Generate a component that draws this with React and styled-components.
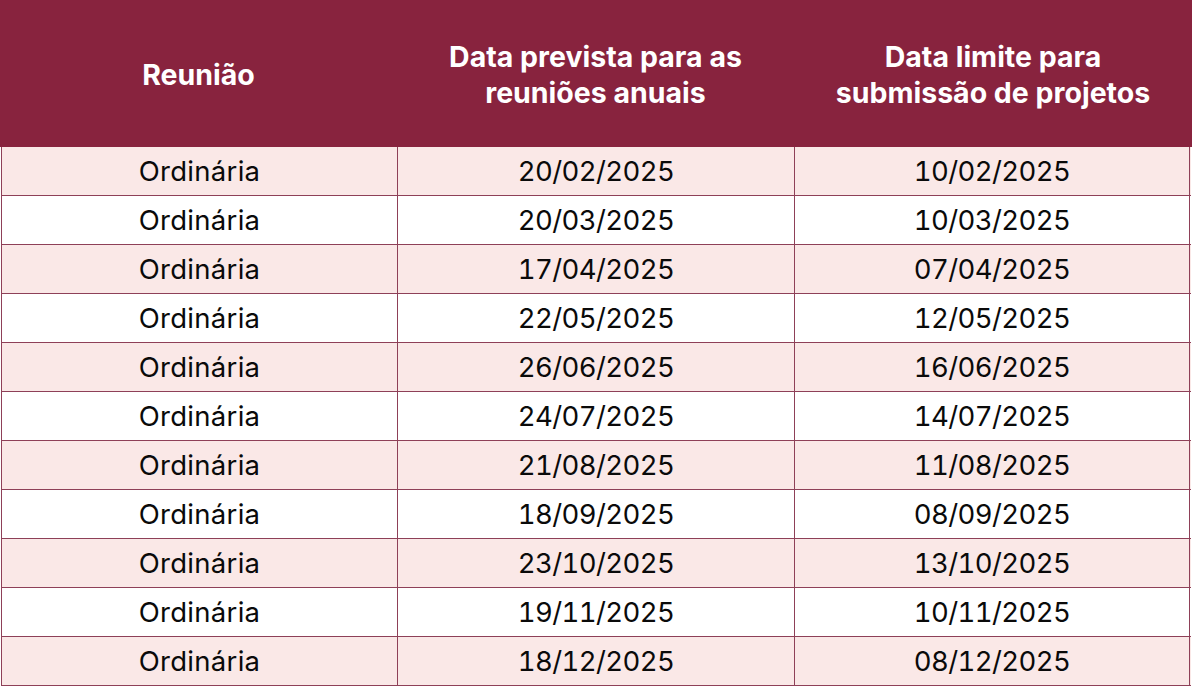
import React from "react";
import styled, { createGlobalStyle } from "styled-components";

const Global = createGlobalStyle`
  html, body { margin: 0; padding: 0; background: #ffffff; }
  body { font-family: Inter, "Noto Sans", sans-serif; }
`;

const Table = styled.div`
  width: 1192px;
  display: flex;
  flex-direction: column;
`;

const HeaderRow = styled.div`
  display: grid;
  grid-template-columns: 397px 397px 398px;
  height: 147px;
  background: #88233e;
  color: #ffffff;
`;

const HeaderCell = styled.div`
  display: flex;
  align-items: center;
  justify-content: center;
  text-align: center;
  font-weight: 700;
  font-size: 28.5px;
  line-height: 36px;
  padding-top: 2px;
  white-space: nowrap;
`;

const Row = styled.div`
  display: grid;
  grid-template-columns: 396px 397px 396px;
  margin-left: 1px;
  width: 1190px;
  height: 48px;
  border-bottom: 1px solid #8e4058;
  background: ${(p) => (p.$alt ? "#fae8e7" : "#ffffff")};
`;

const Cell = styled.div`
  display: flex;
  align-items: center;
  justify-content: center;
  font-size: 27.5px;
  font-variant-numeric: tabular-nums;
  letter-spacing: ${(p) => (p.$date ? "-0.6px" : "0.3px")};
  color: #0a0a0a;
  border-left: 1px solid #8e4058;
  &:last-child { border-right: 1px solid #8e4058; }
`;

const rows = [
  ["20/02/2025", "10/02/2025"],
  ["20/03/2025", "10/03/2025"],
  ["17/04/2025", "07/04/2025"],
  ["22/05/2025", "12/05/2025"],
  ["26/06/2025", "16/06/2025"],
  ["24/07/2025", "14/07/2025"],
  ["21/08/2025", "11/08/2025"],
  ["18/09/2025", "08/09/2025"],
  ["23/10/2025", "13/10/2025"],
  ["19/11/2025", "10/11/2025"],
  ["18/12/2025", "08/12/2025"],
];

export default function App() {
  return (
    <>
      <Global />
      <Table>
        <HeaderRow>
          <HeaderCell>Reunião</HeaderCell>
          <HeaderCell>
            Data prevista para as
            <br />
            reuniões anuais
          </HeaderCell>
          <HeaderCell>
            Data limite para
            <br />
            submissão de projetos
          </HeaderCell>
        </HeaderRow>
        {rows.map((r, i) => (
          <Row key={i} $alt={i % 2 === 0}>
            <Cell>Ordinária</Cell>
            <Cell $date>{r[0]}</Cell>
            <Cell $date>{r[1]}</Cell>
          </Row>
        ))}
      </Table>
    </>
  );
}
